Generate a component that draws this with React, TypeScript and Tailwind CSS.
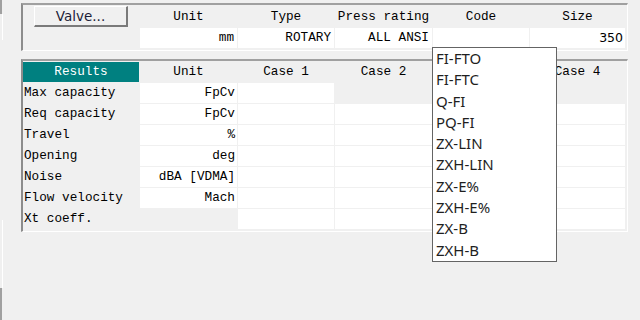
const topCols = ["Unit", "Type", "Press rating", "Code", "Size"];

const resultRows = [
  { label: "Max capacity", unit: "FpCv", cases: [true, false, false, false] },
  { label: "Req capacity", unit: "FpCv", cases: [true, true, true, true] },
  { label: "Travel", unit: "%", cases: [true, true, true, true] },
  { label: "Opening", unit: "deg", cases: [true, true, true, true] },
  { label: "Noise", unit: "dBA [VDMA]", cases: [true, true, true, true] },
  { label: "Flow velocity", unit: "Mach", cases: [true, true, true, true] },
  { label: "Xt coeff.", unit: null, cases: [true, true, true, true] },
];

const codes = ["FI-FTO", "FI-FTC", "Q-FI", "PQ-FI", "ZX-LIN", "ZXH-LIN", "ZX-E%", "ZXH-E%", "ZX-B", "ZXH-B"];

// Case 3 header sits under the open list, so it is left blank
const caseHeads = ["Unit", "Case 1", "Case 2", "", "Case 4"];

const grid = "grid grid-cols-[116px_97px_96px_97px_96px_95px] gap-x-px";

export default function App() {
  return (
    <div className="relative flex h-[320px] w-[640px] overflow-hidden bg-[#f0f0f0] font-['Liberation_Mono',monospace] text-[12.7px] text-black">
      {/* window edge */}
      <div className="flex w-[3px] flex-col">
        <div className="h-[14px] w-[2px] bg-[#a0a0a0]" />
        <div className="ml-[2px] h-[26px] w-px bg-white" />
        <div className="h-[180px]" />
        <div className="ml-[2px] h-[68px] w-px bg-white" />
        <div className="h-[32px] w-[2px] bg-[#a0a0a0]" />
      </div>

      <div className="flex-1 pl-[18px] pr-[12px] pt-[3px]">
        {/* valve panel */}
        <div className="border-b border-l-2 border-r border-t-2 border-b-white border-l-[#8c8c8c] border-r-white border-t-[#a0a0a0] pb-[2px]">
          <div className={grid}>
            <div className="flex h-[22px] justify-center pt-px">
              <button className="flex h-[21px] w-[94px] items-center justify-center border-b-2 border-l border-r-2 border-t border-b-[#7a7a7a] border-l-white border-r-[#7a7a7a] border-t-white bg-[#f0f0f0] font-['DejaVu_Sans',sans-serif] text-[13.5px] text-[#1c1c38]">
                Valve...
              </button>
            </div>
            {topCols.map((c) => (
              <div key={c} className="flex h-[22px] items-center justify-center pt-px">
                {c}
              </div>
            ))}
          </div>
          <div className={`${grid} mt-px`}>
            <div />
            <div className="flex h-[20px] items-center justify-end bg-white pr-[3px]">mm</div>
            <div className="flex h-[20px] items-center justify-end bg-white pr-[3px]">ROTARY</div>
            <div className="flex h-[20px] items-center justify-end bg-white pr-[3px]">ALL ANSI</div>
            <div className="h-[20px] bg-white" />
            <div className="flex h-[20px] items-center justify-end bg-white pr-[2px] font-['DejaVu_Sans',sans-serif] text-[12.5px]">
              350
            </div>
          </div>
        </div>

        {/* results panel */}
        <div className="mt-[8px] border-b border-l-2 border-r border-t-2 border-b-white border-l-[#8c8c8c] border-r-white border-t-[#a0a0a0] pb-[2px] pt-px">
          <div className={`${grid} gap-y-px`}>
            <div className="flex h-[20px] items-center justify-center bg-[#008080] text-white">Results</div>
            {caseHeads.map((h, i) => (
              <div key={i} className="flex h-[20px] items-center justify-center">
                {h}
              </div>
            ))}
            {resultRows.map((r) => (
              <>
                <div key={r.label} className="flex h-[20px] items-center pl-px">
                  {r.label}
                </div>
                <div className={`flex h-[20px] items-center justify-end pr-[2px] ${r.unit ? "bg-white" : ""}`}>
                  {r.unit}
                </div>
                {r.cases.map((on, i) => (
                  <div key={i} className={`h-[20px] ${on ? "bg-white" : ""}`} />
                ))}
              </>
            ))}
          </div>
        </div>
      </div>

      {/* open code list */}
      <div className="absolute left-[432px] top-[47px] w-[125px] border border-[#646464] bg-white font-['Noto_Sans',sans-serif] text-[15px] text-[#1f1f1f]">
        {codes.map((c) => (
          <div key={c} className="h-[21.3px] pl-[3px] leading-[21.3px]">
            {c}
          </div>
        ))}
      </div>
    </div>
  );
}
